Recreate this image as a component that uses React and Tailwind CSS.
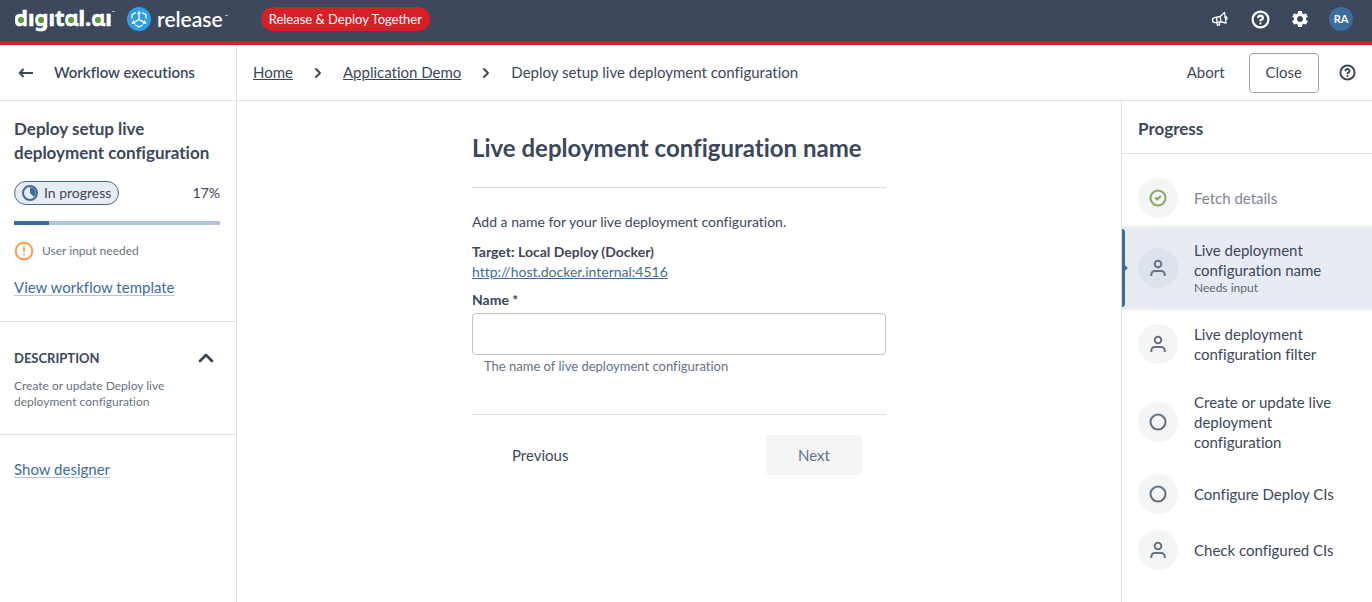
import React, { useState } from "react";
import { ChevronRight, ChevronUp, Circle, CircleAlert, CircleCheck, CircleHelp } from "lucide-react";
import { MdSettings } from "react-icons/md";

const steps = [
  { title: "Fetch details", icon: "done" },
  { title: "Live deployment configuration name", note: "Needs input", icon: "user", active: true },
  { title: "Live deployment configuration filter", icon: "user" },
  { title: "Create or update live deployment configuration", icon: "circle" },
  { title: "Configure Deploy CIs", icon: "circle" },
  { title: "Check configured CIs", icon: "user" },
];

// dotless letters with a green eye in every round bowl
const Wordmark = () => (
  <svg width="102" height="36" viewBox="0 0 102 36" role="img" aria-label="digital.ai">
    <text x="-1" y="25" fill="#fff" stroke="#fff" strokeWidth="0.6" fontFamily="'Noto Sans', sans-serif" fontWeight="700" fontSize="22">
      dıgıtɑl.ɑı
    </text>
    <g fill="#5f9a3c">
      <circle cx="6" cy="19" r="3" />
      <circle cx="26" cy="19" r="3" />
      <circle cx="56" cy="19" r="3" />
      <circle cx="83" cy="19" r="3" />
    </g>
    <path d="M97 10.500h3" stroke="#aab0ba" />
  </svg>
);

const ReleaseLogo = () => (
  <svg width="24" height="24" viewBox="0 0 24 24" aria-hidden="true">
    <circle cx="12" cy="12" r="12" fill="#2d9fe8" />
    <g fill="none" stroke="#fff" strokeWidth="1.3" strokeLinejoin="round">
      <path d="M8.800 5.600 5 7.800v3.700M15.200 5.600 19 7.800v3.700M8.200 17.800l3.800 2.200 3.800-2.200" />
      <path d="M12 12.500V5.500M12 12.500l-5 2.900M12 12.500l5 2.900" />
    </g>
    <path d="M12 3.500 14.200 7H9.800ZM4.500 16.800l1.900-3.700 2.200 3.800ZM19.500 16.800l-1.900-3.700-2.200 3.800Z" fill="#fff" />
  </svg>
);

const MegaphoneIcon = () => (
  <svg width="18" height="18" viewBox="0 0 18 18" fill="none" stroke="#fff" strokeWidth="1.3" strokeLinejoin="round" strokeLinecap="round" aria-hidden="true">
    <path d="M13.500 2.500 15 13 10 11.800l-6 .8C2.600 12.700 1.700 11.800 1.500 10.400 1.300 9 2.100 7.900 3.500 7.600l5.700-1.100Z" />
    <path d="M5.500 7.400l.7 5M9.200 6.500l.8 5.300M5.500 12.500l1 2.800 2.200-.4-.7-2.600M14 7l1.600-.2.400 2.400-1.400.3" />
  </svg>
);

const BackIcon = () => (
  <svg width="16" height="14" viewBox="0 0 16 14" fill="none" stroke="currentColor" strokeWidth="2" aria-hidden="true">
    <path d="M15 7H2M5.500 3 1.800 7l3.700 4" />
  </svg>
);

const UserIcon = () => (
  <svg width="16" height="18" viewBox="0 0 16 18" fill="none" stroke="currentColor" strokeWidth="2" aria-hidden="true">
    <circle cx="8" cy="5" r="3.300" />
    <path d="M1.300 17v-1.500a3.500 3.500 0 0 1 3.500-3.500h6.400a3.500 3.500 0 0 1 3.500 3.500V17" />
  </svg>
);

const StepIcon = ({ icon }) => {
  if (icon === "done") return <CircleCheck size={18} strokeWidth={2.8} className="text-[#84ad60]" />;
  if (icon === "user") return <UserIcon />;
  return <Circle size={18} strokeWidth={2.8} />;
};

const Header = () => (
  <header className="flex h-[45px] items-center border-b-4 border-[#d61f26] bg-[#3d485c] pr-[19px] pb-[3px] pl-[15px] text-white">
    <Wordmark />
    <div className="ml-2.5 flex items-center gap-1.5">
      <ReleaseLogo />
      <span className="text-[21px] leading-6 font-semibold">release</span>
      <svg width="4" height="10" viewBox="0 0 4 10" className="-ml-1" aria-hidden="true">
        <path d="M0 1.500h3" stroke="#aab0ba" />
      </svg>
    </div>
    <span className="ml-8 rounded-full bg-[#d61f26] px-2 py-0.5 text-[13px] leading-5">Release &amp; Deploy Together</span>
    <div className="ml-auto flex items-center gap-[18px]">
      <button aria-label="Announcements" className="flex w-[22px] justify-center"><MegaphoneIcon /></button>
      <button aria-label="Help" className="flex w-[22px] justify-center"><CircleHelp size={19} strokeWidth={2.8} /></button>
      <button aria-label="Settings" className="flex w-[22px] justify-center"><MdSettings size={20} /></button>
      <button className="size-6 rounded-full bg-[#3d6c9e] text-[11px] font-bold">RA</button>
    </div>
  </header>
);

const Sidebar = () => (
  <aside className="w-[237px] shrink-0 border-r border-[#e1e2e5]">
    <div className="flex h-14 items-center gap-5 border-b border-[#e1e2e5] px-[18px]">
      <button aria-label="Back"><BackIcon /></button>
      <span className="text-[15px] font-semibold">Workflow executions</span>
    </div>
    <section className="border-b border-[#e1e2e5] pt-4 pr-4 pb-6 pl-3.5">
      <h1 className="text-[17px] leading-6 font-bold">Deploy setup live deployment configuration</h1>
      <div className="mt-4 flex items-center justify-between">
        <span className="flex h-6 items-center gap-1.5 rounded-full border border-[#3d6c9e] bg-[#e7ecf3] px-[7px] text-sm">
          <svg width="16" height="16" viewBox="0 0 16 16" aria-hidden="true">
            <circle cx="8" cy="8" r="7" fill="none" stroke="#3d6c9e" strokeWidth="2" />
            <path d="M8 8V2.500a5.500 5.500 0 0 1 4 9.500Z" fill="#3d6c9e" />
          </svg>
          In progress
        </span>
        <span className="text-sm">17%</span>
      </div>
      <div className="mt-4 h-1 bg-[#b5c5d8]">
        <div className="h-1 w-[17%] bg-[#3d6c9e]" />
      </div>
      <div className="mt-4 flex items-center gap-2 text-[12px] leading-5 text-[#667385]">
        <CircleAlert size={20} strokeWidth={2.5} className="text-[#ff9e53]" />
        User input needed
      </div>
      <a href="#template" className="mt-4 block text-[15px] leading-5 text-[#3d6c9e] underline decoration-[#b5c5d8] underline-offset-2">View workflow template</a>
    </section>
    <section className="border-b border-[#e1e2e5] py-6 pr-4 pl-3.5">
      <button className="flex w-full items-center justify-between pr-0.5 text-[13px] leading-6 font-bold">
        DESCRIPTION
        <ChevronUp size={24} strokeWidth={2.8} />
      </button>
      <p className="mt-2 text-[12px] leading-4 text-[#667385]">Create or update Deploy live deployment configuration</p>
    </section>
    <a href="#designer" className="mx-3.5 mt-6 inline-block text-[15px] leading-5 text-[#3d6c9e] underline decoration-[#b5c5d8] underline-offset-2">Show designer</a>
  </aside>
);

const TaskForm = () => {
  const [name, setName] = useState("");

  return (
    <form className="mx-auto mt-7 w-[414px]" onSubmit={(e) => e.preventDefault()}>
      <h2 className="border-b border-[#dcdfe3] pt-1 pb-6 text-2xl leading-[30px] font-bold">Live deployment configuration name</h2>
      <p className="mt-6 text-sm leading-5">Add a name for your live deployment configuration.</p>
      <p className="mt-2.5 text-sm leading-5 font-bold">Target: Local Deploy (Docker)</p>
      <a href="#target" className="block text-sm leading-5 text-[#3d6c9e] underline">http://host.docker.internal:4516</a>
      <label htmlFor="name" className="mt-2 block text-sm leading-5 font-bold">Name *</label>
      <input
        id="name"
        value={name}
        onChange={(e) => setName(e.target.value)}
        className="mt-[3px] h-[42px] w-full rounded border border-[#bfc2cb] px-3 text-sm"
      />
      <p className="ml-3 text-[13px] leading-[22px] text-[#667385]">The name of live deployment configuration</p>
      <div className="mt-[37px] flex items-center justify-between border-t border-[#dcdfe3] pt-5 pr-6 pl-6 text-[15px]">
        <button type="button" className="h-10 px-4">Previous</button>
        <button type="submit" className="h-10 w-24 rounded bg-[#f3f5f6] text-[#667385]">Next</button>
      </div>
    </form>
  );
};

const Progress = () => (
  <aside className="w-[251px] shrink-0 border-l border-[#e1e2e5]">
    <h2 className="flex h-[53px] items-center border-b border-[#e1e2e5] px-4 pt-1 text-[17px] font-bold">Progress</h2>
    <ol className="mt-4">
      {steps.map((step) => (
        <li
          key={step.title}
          className={`relative flex items-center gap-4 py-2 pr-8 pl-4 ${step.active ? "bg-[#e7ecf3]" : ""}`}
        >
          {step.active && (
            <span className="absolute inset-y-[3px] left-0 w-[3px] rounded-r-sm bg-[#3d6c9e]">
              <span className="absolute top-1/2 left-[1px] size-1 -translate-y-1/2 rotate-45 bg-[#3d6c9e]" />
            </span>
          )}
          <span className={`flex size-10 shrink-0 items-center justify-center rounded-full text-[#667385] ${step.active ? "bg-[#dce3eb]" : "bg-[#f3f5f6]"}`}>
            <StepIcon icon={step.icon} />
          </span>
          <span className={`py-1.5 text-[15px] leading-5 ${step.icon === "done" ? "text-[#7c8595]" : ""}`}>
            {step.title}
            {step.note && <small className="block text-[12px] leading-4 text-[#5b6472]">{step.note}</small>}
          </span>
        </li>
      ))}
    </ol>
  </aside>
);

const App = () => (
  <div className="flex min-h-screen flex-col bg-white font-['Lato',sans-serif] text-[#3b485c] [font-variant-ligatures:none]">
    <Header />
    <div className="flex flex-1">
      <Sidebar />
      <div className="flex min-w-0 flex-1 flex-col">
        <div className="flex h-14 shrink-0 items-center border-b border-[#e1e2e5] pr-4 pl-4 text-[15px]">
          <nav aria-label="Breadcrumb" className="flex items-center gap-[17px]">
            <a href="#home" className="underline">Home</a>
            <ChevronRight size={16} strokeWidth={2.8} />
            <a href="#demo" className="underline">Application Demo</a>
            <ChevronRight size={16} strokeWidth={2.8} />
            <span>Deploy setup live deployment configuration</span>
          </nav>
          <div className="ml-auto flex items-center">
            <button className="mr-6">Abort</button>
            <button className="mr-5 h-10 rounded border border-[#9da4b0] px-4">Close</button>
            <button aria-label="Help"><CircleHelp size={17} strokeWidth={2.8} /></button>
          </div>
        </div>
        <div className="flex flex-1">
          <main className="min-w-0 flex-1">
            <TaskForm />
          </main>
          <Progress />
        </div>
      </div>
    </div>
  </div>
);

export default App;
